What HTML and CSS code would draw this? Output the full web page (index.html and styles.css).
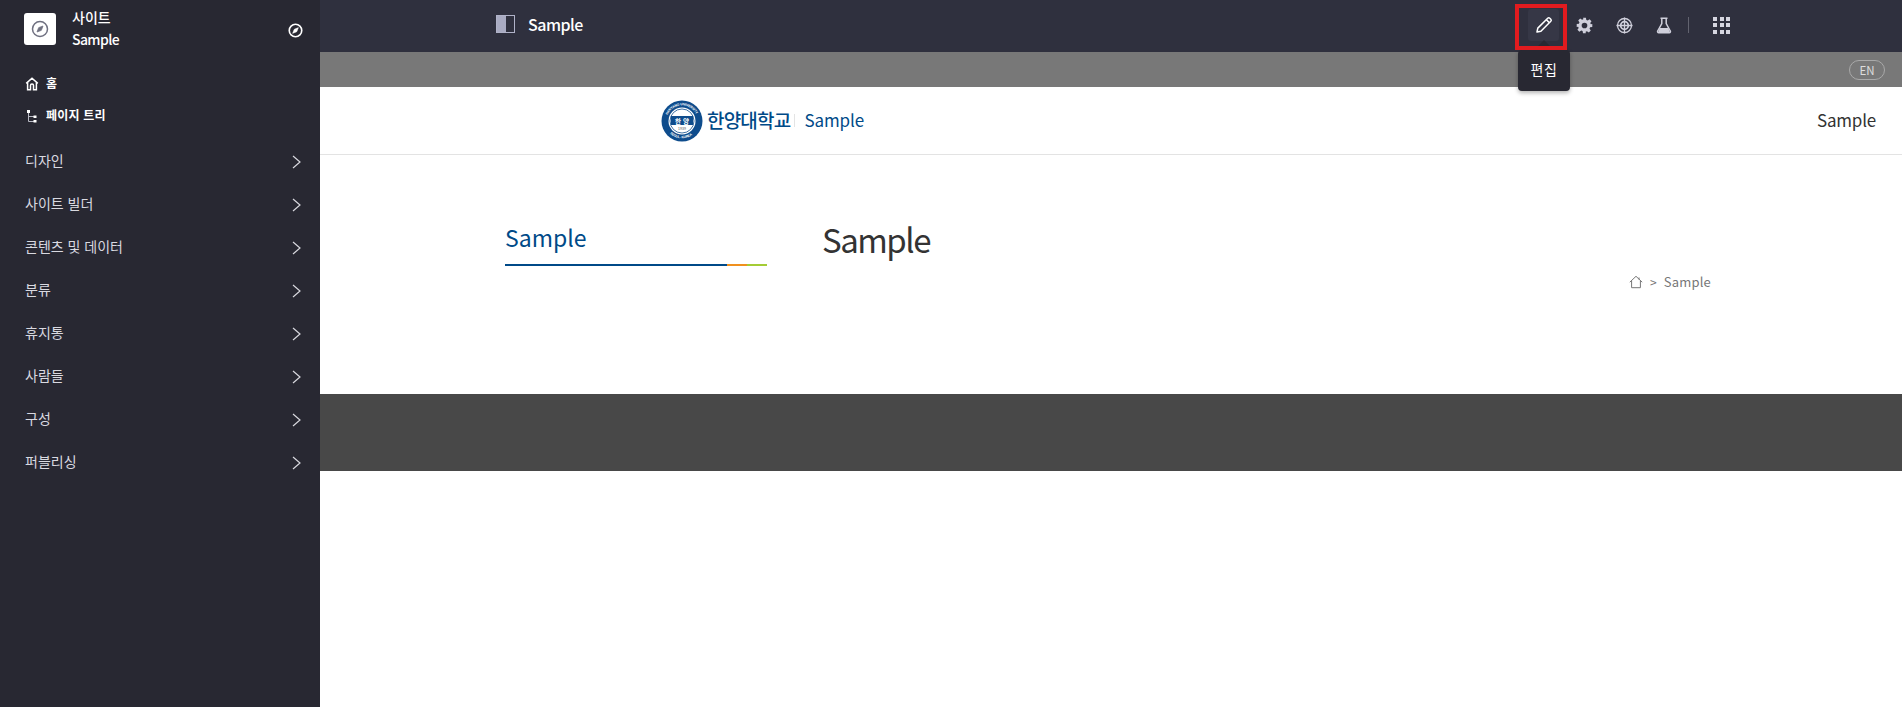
FILE: index.html
```html
<!DOCTYPE html>
<html lang="ko">
<head>
<meta charset="utf-8">
<title>Sample</title>
<link rel="stylesheet" href="styles.css">
</head>
<body>
<aside class="sidebar">
  <div class="site">
    <div class="site-logo">
      <svg width="18" height="18" viewBox="0 0 24 24" fill="none" stroke="#6f7080" stroke-width="2"><circle cx="12" cy="12" r="10"/><path d="M16 8l-2.2 5.8L8 16l2.2-5.8z" fill="#6f7080" stroke-width="1"/></svg>
    </div>
    <div class="site-name"><span>사이트</span><span class="site-sample">Sample</span></div>
    <svg class="site-switch" width="15" height="15" viewBox="0 0 24 24" fill="none" stroke="#fff" stroke-width="2.6"><circle cx="12" cy="12" r="10"/><path d="M16.5 7.5l-2.6 6.4-6.4 2.6 2.6-6.4z" fill="#fff" stroke-width="1"/></svg>
  </div>
  <nav class="quick">
    <a class="quick-item"><svg width="14" height="14" viewBox="0 0 14 14" fill="none" stroke="#fff" stroke-width="1.5"><path d="M1.2 6.4L7 1.3l5.8 5.1M2.600 5.400v7.400h2.900V8.600a1.500 1.500 0 0 1 3 0v4.200h2.900V5.400"/></svg><span>홈</span></a>
    <a class="quick-item"><svg width="14" height="14" viewBox="0 0 14 14" fill="none"><path d="M3.500 3v9.500h6M3.500 7.500h6" stroke="#b9bac4" stroke-width="1"/><rect x="2" y="1" width="3" height="3" fill="#fff"/><rect x="8.500" y="6.500" width="3" height="2.500" fill="#fff"/><rect x="8.500" y="11" width="3" height="2.500" fill="#fff"/></svg><span>페이지 트리</span></a>
  </nav>
  <ul class="menu">
    <li class="menu-item"><span>디자인</span><svg width="9" height="14" viewBox="0 0 9 14" fill="none" stroke="#d8d8de" stroke-width="1.200"><path d="M1 1l7 6-7 6"/></svg></li>
    <li class="menu-item"><span>사이트 빌더</span><svg width="9" height="14" viewBox="0 0 9 14" fill="none" stroke="#d8d8de" stroke-width="1.200"><path d="M1 1l7 6-7 6"/></svg></li>
    <li class="menu-item"><span>콘텐츠 및 데이터</span><svg width="9" height="14" viewBox="0 0 9 14" fill="none" stroke="#d8d8de" stroke-width="1.200"><path d="M1 1l7 6-7 6"/></svg></li>
    <li class="menu-item"><span>분류</span><svg width="9" height="14" viewBox="0 0 9 14" fill="none" stroke="#d8d8de" stroke-width="1.200"><path d="M1 1l7 6-7 6"/></svg></li>
    <li class="menu-item"><span>휴지통</span><svg width="9" height="14" viewBox="0 0 9 14" fill="none" stroke="#d8d8de" stroke-width="1.200"><path d="M1 1l7 6-7 6"/></svg></li>
    <li class="menu-item"><span>사람들</span><svg width="9" height="14" viewBox="0 0 9 14" fill="none" stroke="#d8d8de" stroke-width="1.200"><path d="M1 1l7 6-7 6"/></svg></li>
    <li class="menu-item"><span>구성</span><svg width="9" height="14" viewBox="0 0 9 14" fill="none" stroke="#d8d8de" stroke-width="1.200"><path d="M1 1l7 6-7 6"/></svg></li>
    <li class="menu-item"><span>퍼블리싱</span><svg width="9" height="14" viewBox="0 0 9 14" fill="none" stroke="#d8d8de" stroke-width="1.200"><path d="M1 1l7 6-7 6"/></svg></li>
  </ul>
</aside>
<div class="main">
  <header class="topbar">
    <div class="panel-icon"><span class="panel-fill"></span></div>
    <div class="top-title">Sample</div>
    <div class="tools">
      <div class="tool tool-edit">
        <svg width="18" height="18" viewBox="0 0 18 18" fill="none" stroke="#fff" stroke-width="1.500" stroke-linejoin="round"><path d="M2 16l.8-3.900L12.700 2.200a1.500 1.500 0 0 1 2.100 0l1 1a1.500 1.500 0 0 1 0 2.100L5.900 15.200z"/><path d="M11.300 3.600l3.100 3.100"/></svg>
        <div class="tooltip">편집</div>
        <span class="edit-mark"></span>
      </div>
      <div class="tool">
        <svg width="17" height="17" viewBox="0 0 24 24" fill="#cfcfdb"><path fill-rule="evenodd" d="M10 1h4l.6 3.100 1.900.8 2.600-1.800 2.800 2.800-1.800 2.600.8 1.900L23 10v4l-3.100.6-.8 1.900 1.800 2.600-2.800 2.800-2.600-1.800-1.900.8L13.900 23h-4l-.6-3.100-1.900-.8-2.600 1.800-2.800-2.800 1.800-2.600-.8-1.900L1 14v-4l3.100-.6.8-1.900-1.800-2.600 2.800-2.800 2.600 1.800 1.900-.8zM12 8a4 4 0 1 0 0 8 4 4 0 0 0 0-8z"/></svg>
      </div>
      <div class="tool">
        <svg width="17" height="17" viewBox="0 0 17 17" fill="none" stroke="#cfcfdb" stroke-width="1.300"><circle cx="8.500" cy="8.500" r="7"/><circle cx="8.500" cy="8.500" r="3.800" stroke-width="1.800"/><path d="M8.500 .5v16M.5 8.500h16"/></svg>
      </div>
      <div class="tool">
        <svg width="16" height="17" viewBox="0 0 16 17" fill="none" stroke="#cfcfdb" stroke-width="1.500"><path d="M4.500 1.200h7M5.800 1.200v5.300L1.700 14a1.200 1.200 0 0 0 1 1.800h10.600a1.200 1.200 0 0 0 1-1.800l-4.100-7.500V1.200"/><path d="M3.700 11h8.600l1.600 4H2.200z" fill="#cfcfdb" stroke="none"/></svg>
      </div>
      <span class="tool-sep"></span>
      <div class="grid-icon"><i></i><i></i><i></i><i></i><i></i><i></i><i></i><i></i><i></i></div>
    </div>
  </header>
  <div class="langbar"><span class="lang">EN</span></div>
  <div class="site-header">
    <svg class="seal" width="42" height="42" viewBox="0 0 42 42">
      <defs>
        <path id="ring-top" d="M6.500 15A15.700 15.700 0 0 1 35.500 15"/>
        <path id="ring-bottom" d="M9 33.500A17.300 17.300 0 0 0 33 33.500"/>
      </defs>
      <circle cx="21" cy="21" r="20.500" fill="#0e4c8c"/>
      <circle cx="21" cy="21" r="13.500" fill="#fff"/>
      <circle cx="21" cy="21" r="12" fill="none" stroke="#0e4c8c" stroke-width=".8"/>
      <text class="seal-ring" fill="#fff"><textPath href="#ring-top" textLength="36">HANYANG UNIVERSITY</textPath></text>
      <text class="seal-ring" fill="#fff"><textPath href="#ring-bottom" textLength="24">SEOUL · KOREA</textPath></text>
      <rect x="10" y="16" width="22" height="9" fill="#0e4c8c"/>
      <text class="seal-name" x="21" y="23.500" text-anchor="middle" fill="#fff">한 양</text>
      <text class="seal-year" x="21" y="30" text-anchor="middle" fill="#555">1939</text>
    </svg>
    <span class="brand">한양대학교</span>
    <span class="brand-sep"></span>
    <span class="brand-sub">Sample</span>
    <span class="header-right">Sample</span>
  </div>
  <div class="content">
    <div class="side-col">
      <div class="side-title">Sample</div>
      <div class="side-rule"><span class="rule-blue"></span><span class="rule-orange"></span><span class="rule-green"></span></div>
    </div>
    <div class="page-col">
      <h1 class="page-title">Sample</h1>
      <div class="crumbs">
        <svg width="14" height="14" viewBox="0 0 14 14" fill="none" stroke="#777" stroke-width="1"><path d="M.8 7.200L7 1.300l6.200 5.900M2.600 6v6.700h8.800V6M10 2.500v2"/></svg>
        <span class="crumb-sep">&gt;</span>
        <span class="crumb-text">Sample</span>
      </div>
    </div>
  </div>
  <div class="footer"></div>
</div>
</body>
</html>
```

FILE: styles.css
```css
* { box-sizing: border-box; }
html, body { margin: 0; padding: 0; height: 707px; overflow: hidden; }
body {
  display: flex;
  background: #fff;
  font-family: "Noto Sans CJK KR", "Noto Sans", sans-serif;
}
.sidebar { width: 320px; flex: none; height: 707px; background: #282832; color: #fff; }
.site { display: flex; align-items: center; height: 58px; padding-left: 24px; }
.site-logo {
  width: 32px; height: 32px; background: #fff; border-radius: 3px;
  display: flex; align-items: center; justify-content: center; flex: none;
}
.site-name {
  display: flex; flex-direction: column; margin-left: 16px; margin-bottom: 2px; width: 216px;
  font-size: 14px; font-weight: 500; line-height: 22px;
}
.site-sample { letter-spacing: -.6px; }
.site-switch { flex: none; margin-top: 2px; }
.quick { padding-top: 10px; height: 82px; }
.quick-item {
  display: flex; align-items: center; height: 32px; padding-left: 25px;
  font-size: 12px; font-weight: 700; color: #fff; letter-spacing: .2px;
}
.quick-item span { margin-left: 7px; margin-bottom: 3px; }
.menu { list-style: none; margin: 0; padding: 0; }
.menu-item {
  display: flex; align-items: center; justify-content: space-between;
  height: 43px; padding: 0 19px 0 25px;
  font-size: 14px; color: #d9d9e0;
}
.menu-item span { margin-bottom: 3px; }
.main { flex: 1; min-width: 0; display: flex; flex-direction: column; }
.topbar {
  height: 52px; background: #2f303e; display: flex; align-items: center;
  padding: 0 172px 2px 176px; position: relative;
}
.panel-icon { width: 19px; height: 18px; border: 1px solid #b0b2c8; flex: none; margin-bottom: 2px; }
.panel-fill { display: block; width: 9px; height: 100%; background: #a9abc2; }
.top-title { margin-left: 13px; margin-bottom: 2px; font-size: 16px; font-weight: 500; color: #fff; letter-spacing: -.5px; }
.tools { display: flex; align-items: center; margin-left: auto; }
.tool { width: 40px; height: 32px; display: flex; align-items: center; justify-content: center; position: relative; flex: none; }
.tool-edit { width: 31px; margin-right: 5px; background: #363746; border-radius: 3px; }
.edit-mark { position: absolute; left: -13px; top: -5px; width: 52px; height: 46px; border: 4px solid #e21b1f; z-index: 4; }
.tooltip {
  position: absolute; left: -10px; top: 41px; width: 52px; height: 41px;
  background: #282832; color: #fff; border-radius: 4px; padding-bottom: 4px;
  font-size: 14px; font-weight: 400; letter-spacing: .5px; display: flex; align-items: center; justify-content: center;
  box-shadow: 0 2px 4px rgba(0,0,0,.3); z-index: 3;
}
.tooltip::before {
  content: ""; position: absolute; left: 20px; top: -10px;
  border-left: 6px solid transparent; border-right: 6px solid transparent; border-bottom: 6px solid #282832;
}
.tool-sep { width: 1px; height: 16px; background: #62636f; margin-left: 4px; }
.grid-icon {
  display: grid; grid-template-columns: repeat(3, 4px); grid-auto-rows: 4px; gap: 2.500px;
  margin-left: 24px;
}
.grid-icon i { background: #d6d6e0; display: block; }
.langbar { height: 35px; background: #787878; display: flex; align-items: center; justify-content: flex-end; padding: 1px 17px 0 0; }
.lang {
  width: 36px; height: 20px; border: 1px solid #a9a9a9; border-radius: 10px;
  color: #ddd; font-size: 11.500px; display: flex; align-items: center; justify-content: center;
}
.site-header {
  height: 68px; display: flex; align-items: center; padding-left: 341px; padding-right: 26px;
  border-bottom: 1px solid #e3e3e3;
}
.seal { flex: none; }
.seal-ring { font-family: "Liberation Sans", sans-serif; font-size: 3.400px; font-weight: 700; }
.seal-name { font-family: "Noto Sans CJK KR", sans-serif; font-size: 6.500px; font-weight: 700; }
.seal-year { font-family: "Liberation Sans", sans-serif; font-size: 3.500px; }
.brand { margin-left: 4px; margin-bottom: 3px; font-size: 19px; font-weight: 500; letter-spacing: -.8px; color: #004a88; }
.brand-sep { width: 1px; height: 13px; background: #e4e4e4; margin-left: 4px; }
.brand-sub { margin-left: 9px; margin-bottom: 3px; font-size: 17px; letter-spacing: -.1px; color: #004a88; }
.header-right { margin-left: auto; margin-bottom: 3px; font-size: 17px; letter-spacing: -.2px; color: #333; }
.content { height: 239px; display: flex; padding-left: 185px; }
.side-col { width: 262px; flex: none; padding-top: 65px; }
.side-title { font-size: 23px; line-height: 34px; color: #004a88; height: 44px; }
.side-rule { display: flex; height: 2px; }
.rule-blue { flex: 1; background: #004a88; }
.rule-orange { width: 20px; background: #f0901e; }
.rule-green { width: 20px; background: #a4cc35; }
.page-col { width: 889px; margin-left: 55px; padding-top: 59px; }
.page-title { margin: 0; font-size: 33px; line-height: 50px; font-weight: 400; letter-spacing: -1.500px; color: #333; }
.crumbs {
  display: flex; align-items: center; justify-content: flex-end; margin-top: 8px;
  font-size: 13px; color: #777; gap: 7px;
}
.crumb-text { letter-spacing: .2px; }
.crumb-sep { font-size: 12px; }
.footer { height: 77px; background: #484848; }
```
